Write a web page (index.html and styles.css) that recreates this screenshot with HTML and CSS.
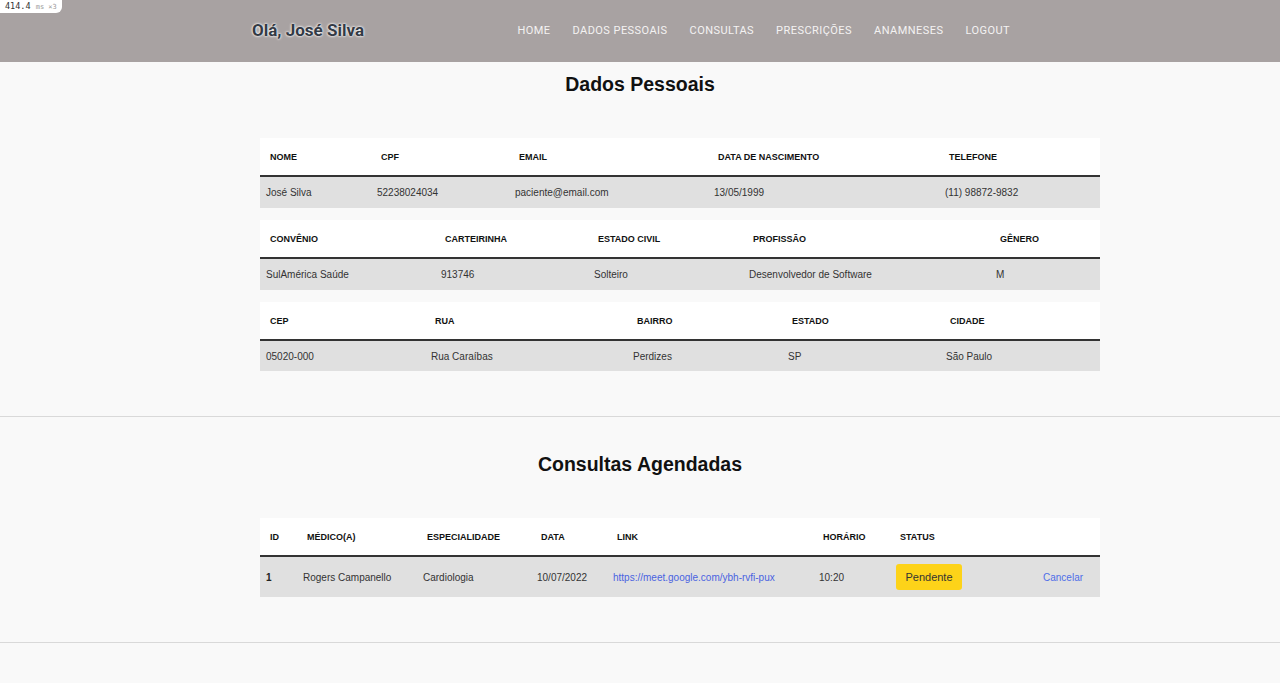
FILE: index.html
```html
<!DOCTYPE html>
<html lang="pt-BR">
<head>
<meta charset="utf-8">
<title>Paciente</title>
<link rel="stylesheet" href="styles.css">
</head>
<body>
<div class="perf"><span class="perf-num">414.4</span> <span class="perf-unit">ms ×3</span></div>
<header class="topbar">
  <div class="topbar-inner">
    <div class="greeting">Olá, José Silva</div>
    <nav class="nav">
      <a href="#">HOME</a>
      <a href="#">DADOS PESSOAIS</a>
      <a href="#">CONSULTAS</a>
      <a href="#">PRESCRIÇÕES</a>
      <a href="#">ANAMNESES</a>
      <a href="#">LOGOUT</a>
    </nav>
  </div>
</header>

<section class="section section-first">
  <h2 class="title">Dados Pessoais</h2>
  <div class="tables">
    <table class="data t1">
      <colgroup><col class="c1"><col class="c2"><col class="c3"><col class="c4"><col class="c5"></colgroup>
      <thead><tr><th>NOME</th><th>CPF</th><th>EMAIL</th><th>DATA DE NASCIMENTO</th><th>TELEFONE</th></tr></thead>
      <tbody><tr><td>José Silva</td><td>52238024034</td><td>paciente@email.com</td><td>13/05/1999</td><td>(11) 98872-9832</td></tr></tbody>
    </table>
    <table class="data t2">
      <colgroup><col class="c1"><col class="c2"><col class="c3"><col class="c4"><col class="c5"></colgroup>
      <thead><tr><th>CONVÊNIO</th><th>CARTEIRINHA</th><th>ESTADO CIVIL</th><th>PROFISSÃO</th><th>GÊNERO</th></tr></thead>
      <tbody><tr><td>SulAmérica Saúde</td><td>913746</td><td>Solteiro</td><td>Desenvolvedor de Software</td><td>M</td></tr></tbody>
    </table>
    <table class="data t3">
      <colgroup><col class="c1"><col class="c2"><col class="c3"><col class="c4"><col class="c5"></colgroup>
      <thead><tr><th>CEP</th><th>RUA</th><th>BAIRRO</th><th>ESTADO</th><th>CIDADE</th></tr></thead>
      <tbody><tr><td>05020-000</td><td>Rua Caraíbas</td><td>Perdizes</td><td>SP</td><td>São Paulo</td></tr></tbody>
    </table>
  </div>
</section>

<section class="section section-second">
  <h2 class="title">Consultas Agendadas</h2>
  <div class="tables">
    <table class="data t4">
      <colgroup><col class="c1"><col class="c2"><col class="c3"><col class="c4"><col class="c5"><col class="c6"><col class="c7"><col class="c8"></colgroup>
      <thead><tr><th>ID</th><th>MÉDICO(A)</th><th>ESPECIALIDADE</th><th>DATA</th><th>LINK</th><th>HORÁRIO</th><th>STATUS</th><th></th></tr></thead>
      <tbody><tr>
        <td class="id">1</td>
        <td>Rogers Campanello</td>
        <td>Cardiologia</td>
        <td>10/07/2022</td>
        <td><a class="link" href="#">https://meet.google.com/ybh-rvfi-pux</a></td>
        <td>10:20</td>
        <td><span class="badge">Pendente</span></td>
        <td><a class="link cancel" href="#">Cancelar</a></td>
      </tr></tbody>
    </table>
  </div>
</section>
<div class="after"></div>
</body>
</html>
```
FILE: styles.css
```css
* { box-sizing: border-box; }
html, body { margin: 0; padding: 0; }
body {
  background: #f9f9f9;
  font-family: "Liberation Sans", Arial, sans-serif;
  color: #222;
  position: relative;
}
.perf {
  position: absolute;
  top: 0; left: 0;
  z-index: 5;
  background: #fff;
  border-bottom-right-radius: 6px;
  padding: 0 5px 0 5px;
  height: 13px;
  line-height: 13px;
  font-family: "DejaVu Sans Mono", monospace;
  font-size: 8.5px;
  color: #333;
}
.perf-unit { color: #999; font-size: 7px; }

.topbar {
  background: #a8a2a2;
  height: 62px;
}
.topbar-inner {
  width: 776px;
  margin: 0 auto;
  height: 62px;
  display: flex;
  align-items: center;
  justify-content: space-between;
  padding-right: 18px;
}
.greeting {
  font-family: Roboto, "Liberation Sans", sans-serif;
  font-weight: 700;
  font-size: 17px;
  color: #333a45;
  text-shadow: 0 0 3px #fff, 0 0 2px #fff;
  margin-top: -2px;
}
.nav {
  display: flex;
  gap: 22px;
  margin-top: -1px;
}
.nav a {
  font-family: Roboto, "Liberation Sans", sans-serif;
  font-size: 11px;
  letter-spacing: 0.45px;
  color: #f4f2f2;
  text-decoration: none;
}

.section {
  border-bottom: 1px solid #d9d9d9;
  padding-bottom: 45px;
}
.section-first { padding-top: 10px; }
.section-second { padding-top: 35px; }
.title {
  margin: 0;
  text-align: center;
  font-size: 19.5px;
  line-height: 24px;
  font-weight: 700;
  color: #111;
}
.tables {
  width: 840px;
  margin: 42px 0 0 calc(50% - 380px);
  display: flex;
  flex-direction: column;
  gap: 12px;
}
.data {
  width: 840px;
  border-collapse: collapse;
  table-layout: fixed;
}
.data thead tr { background: #fff; }
.data th {
  height: 38px;
  text-align: left;
  font-size: 9px;
  font-weight: 700;
  color: #111;
  padding: 1px 0 0 10px;
  border-bottom: 2px solid #333;
  white-space: nowrap;
}
.data tbody tr { background: #e0e0e0; }
.data td {
  height: 32px;
  font-size: 10px;
  color: #333;
  padding: 0 0 0 6px;
  white-space: nowrap;
}
.t3 td { height: 31px; }

.t1 .c1 { width: 111px; } .t1 .c2 { width: 138px; } .t1 .c3 { width: 199px; } .t1 .c4 { width: 231px; } .t1 .c5 { width: 161px; }
.t2 .c1 { width: 175px; } .t2 .c2 { width: 153px; } .t2 .c3 { width: 155px; } .t2 .c4 { width: 247px; } .t2 .c5 { width: 110px; }
.t3 .c1 { width: 165px; } .t3 .c2 { width: 202px; } .t3 .c3 { width: 155px; } .t3 .c4 { width: 158px; } .t3 .c5 { width: 160px; }
.t4 .c1 { width: 37px; } .t4 .c2 { width: 120px; } .t4 .c3 { width: 114px; } .t4 .c4 { width: 76px; } .t4 .c5 { width: 206px; } .t4 .c6 { width: 77px; } .t4 .c7 { width: 147px; } .t4 .c8 { width: 63px; }

.t4 th { height: 38px; }
.t4 td { height: 41px; }
.t4 td.id { font-weight: 700; color: #222; }
.link { color: #4a63e0; text-decoration: none; }
.cancel { color: #4f6ee8; }
.badge {
  display: inline-block;
  background: #fdd319;
  color: #333;
  font-size: 11px;
  width: 66px;
  height: 26px;
  line-height: 26px;
  text-align: center;
  border-radius: 3px;
}
.after { height: 40px; }
```
